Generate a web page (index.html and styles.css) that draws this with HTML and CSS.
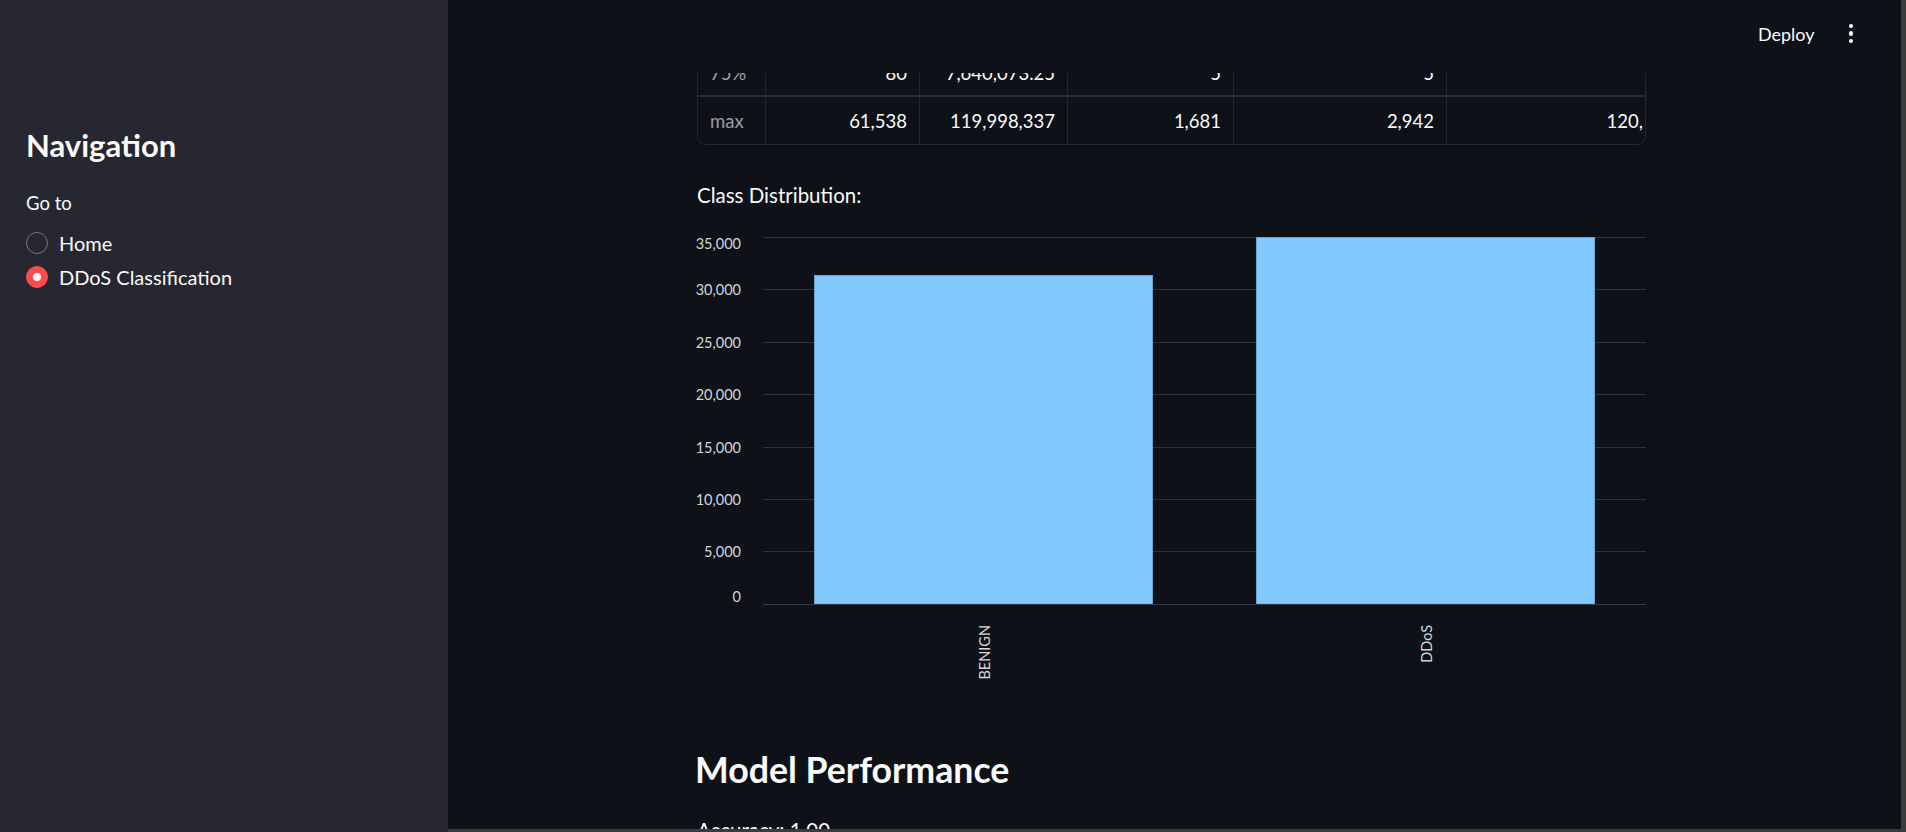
FILE: index.html
```html
<!DOCTYPE html>
<html lang="en">
<head>
<meta charset="utf-8">
<title>DDoS Classification</title>
<link rel="stylesheet" href="styles.css">
</head>
<body>
<div class="app">
  <aside class="sidebar">
    <h1 class="side-title">Navigation</h1>
    <div class="radio-label">Go to</div>
    <div class="radio-group">
      <label class="radio"><span class="dot"></span><span class="radio-text">Home</span></label>
      <label class="radio checked"><span class="dot"></span><span class="radio-text">DDoS Classification</span></label>
    </div>
  </aside>
  <main class="main">
    <header class="topbar">
      <span class="deploy">Deploy</span>
      <span class="kebab"><i></i><i></i><i></i></span>
    </header>
    <div class="content">
      <div class="table">
        <div class="row">
          <div class="cell idx">75%</div>
          <div class="cell">80</div>
          <div class="cell">7,640,073.25</div>
          <div class="cell">5</div>
          <div class="cell">5</div>
          <div class="cell last"></div>
        </div>
        <div class="row">
          <div class="cell idx">max</div>
          <div class="cell">61,538</div>
          <div class="cell">119,998,337</div>
          <div class="cell">1,681</div>
          <div class="cell">2,942</div>
          <div class="cell last">120,</div>
        </div>
      </div>
      <p class="text class-dist">Class Distribution:</p>
      <svg class="chart" width="949" height="470" viewBox="0 0 949 470">
        <g class="grid">
          <line x1="66" x2="949" y1="11.5" y2="11.5"/>
          <line x1="66" x2="949" y1="63.5" y2="63.5"/>
          <line x1="66" x2="949" y1="116.5" y2="116.5"/>
          <line x1="66" x2="949" y1="168.5" y2="168.5"/>
          <line x1="66" x2="949" y1="221.5" y2="221.5"/>
          <line x1="66" x2="949" y1="273.5" y2="273.5"/>
          <line x1="66" x2="949" y1="325.5" y2="325.5"/>
        </g>
        <g class="ylabels">
          <text x="44" y="22.5">35,000</text>
          <text x="44" y="68.5">30,000</text>
          <text x="44" y="121.5">25,000</text>
          <text x="44" y="173.5">20,000</text>
          <text x="44" y="226.5">15,000</text>
          <text x="44" y="278.5">10,000</text>
          <text x="44" y="330.5">5,000</text>
          <text x="44" y="376">0</text>
        </g>
        <rect class="bar" x="117.5" y="49.5" width="338" height="328.5"/>
        <rect class="bar" x="559.5" y="11.5" width="338" height="366.5"/>
        <line class="axis" x1="66" x2="949" y1="378.5" y2="378.5"/>
        <g class="xlabels">
          <text transform="translate(293 399) rotate(-90)">BENIGN</text>
          <text transform="translate(735 399) rotate(-90)">DDoS</text>
        </g>
      </svg>
      <h3 class="subheader">Model Performance</h3>
      <p class="text accuracy">Accuracy: 1.00</p>
    </div>
    <div class="hbar"></div>
  </main>
  <div class="vbar"></div>
</div>
</body>
</html>
```
FILE: styles.css
```css
* { box-sizing: border-box; }
html, body {
  margin: 0;
  padding: 0;
  background: #0e1117;
}
body {
  font-family: Lato, "Noto Sans", "Liberation Sans", sans-serif;
  color: #fafafa;
  width: 1906px;
  height: 832px;
  overflow: hidden;
}
.app {
  display: flex;
  height: 832px;
}
.sidebar {
  width: 448px;
  flex: 0 0 448px;
  background: #262730;
  padding: 126px 27px 0 26px;
}
.side-title {
  margin: 0;
  font-size: 31px;
  line-height: 38px;
  font-weight: 700;
  color: #fafafa;
}
.radio-label {
  margin-top: 27px;
  font-size: 18.5px;
  line-height: 24px;
  color: #fafafa;
}
.radio-group {
  margin-top: 17px;
  display: flex;
  flex-direction: column;
  gap: 12px;
}
.radio {
  display: flex;
  align-items: center;
  gap: 11px;
  height: 22px;
  font-size: 20px;
}
.dot {
  width: 22px;
  height: 22px;
  border-radius: 50%;
  border: 1.5px solid #76777d;
  display: flex;
  align-items: center;
  justify-content: center;
}
.radio.checked .dot {
  background: #ff4b4b;
  border-color: #ff4b4b;
}
.radio.checked .dot::after {
  content: "";
  width: 8px;
  height: 8px;
  border-radius: 50%;
  background: #fafafa;
}
.main {
  flex: 1;
  position: relative;
  overflow: hidden;
  display: flex;
  flex-direction: column;
}
.topbar {
  position: absolute;
  top: 0;
  left: 0;
  right: 0;
  height: 73px;
  background: #0e1117;
  z-index: 2;
  display: flex;
  align-items: center;
  justify-content: flex-end;
  padding: 0 48px 0 0;
  gap: 34px;
}
.deploy {
  font-size: 18px;
  color: #fafafa;
  margin-top: -6px;
}
.kebab {
  display: flex;
  flex-direction: column;
  gap: 3px;
  margin-top: -6px;
}
.kebab i {
  display: block;
  width: 4.5px;
  height: 4.5px;
  border-radius: 50%;
  background: #fafafa;
}
.content {
  flex: 1;
  padding: 50px 0 0 249px;
  width: 1198px;
}
.table {
  width: 949px;
  border: 1px solid #26282f;
  border-top: none;
  border-radius: 0 0 9px 9px;
  overflow: hidden;
  font-size: 18.5px;
}
.row {
  display: grid;
  grid-template-columns: 68px 154px 148px 166px 213px 1fr;
  height: 47px;
}
.row:first-child {
  border-bottom: 2px solid #292b32;
  height: 47px;
}
.cell {
  border-right: 1px solid #26282f;
  display: flex;
  align-items: center;
  justify-content: flex-end;
  padding: 0 12px;
  color: #fafafa;
  white-space: nowrap;
}
.cell.idx {
  justify-content: flex-start;
  color: #9d9ea3;
}
.cell.last {
  border-right: none;
  padding-right: 2px;
}
.text {
  margin: 0;
  font-size: 20.5px;
  line-height: 34px;
}
.class-dist {
  margin-top: 33px;
}
.chart {
  display: block;
  margin-top: 14px;
  overflow: visible;
  font-family: Lato, "Noto Sans", "Liberation Sans", sans-serif;
}
.grid line {
  stroke: #2f3139;
  stroke-width: 1;
}
.axis {
  stroke: #3a3c44;
  stroke-width: 1;
}
.ylabels text {
  fill: #d4d5d8;
  font-size: 14.5px;
  text-anchor: end;
}
.xlabels text {
  fill: #d4d5d8;
  font-size: 14.5px;
  text-anchor: end;
}
.bar {
  fill: #83c9ff;
  stroke: #6aa5d2;
  stroke-width: 1;
}
.subheader {
  margin: 51px 0 0 -2px;
  font-size: 35.7px;
  line-height: 45px;
  font-weight: 700;
  color: #fafafa;
}
.accuracy {
  margin-top: 21px;
}
.hbar {
  position: absolute;
  left: 0;
  right: 0;
  bottom: 0;
  height: 3px;
  background: #3b3b3e;
  z-index: 3;
}
.vbar {
  width: 5px;
  flex: 0 0 5px;
  background: #3b3b3e;
}
```
